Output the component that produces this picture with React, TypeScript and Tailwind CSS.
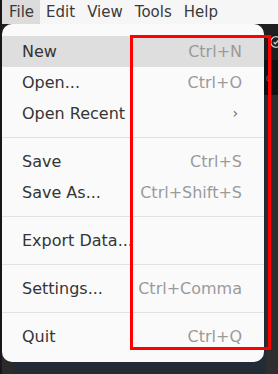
import React from "react";

type Item = { label: string; shortcut?: string; sub?: boolean; active?: boolean } | "sep";

const items: Item[] = [
  { label: "New", shortcut: "Ctrl+N", active: true },
  { label: "Open...", shortcut: "Ctrl+O" },
  { label: "Open Recent", sub: true },
  "sep",
  { label: "Save", shortcut: "Ctrl+S" },
  { label: "Save As...", shortcut: "Ctrl+Shift+S" },
  "sep",
  { label: "Export Data..." },
  "sep",
  { label: "Settings...", shortcut: "Ctrl+Comma" },
  "sep",
  { label: "Quit", shortcut: "Ctrl+Q" },
];

export default function App() {
  return (
    <div
      className="relative w-[278px] h-[374px] overflow-hidden flex bg-[#2e2e2e]"
      style={{ fontFamily: '"DejaVu Sans", sans-serif' }}
    >
      <div className="w-[2px] h-full bg-[#1b141a] shrink-0" />
      <div className="flex-1 flex flex-col">
        {/* menubar */}
        <div className="h-[24px] bg-[#f6f6f6] flex items-stretch text-[15px] text-[#3a3a3a]">
          {["File", "Edit", "View", "Tools", "Help"].map((m, i) => (
            <div
              key={m}
              className={
                "flex items-center px-[6px] " + (i === 0 ? "bg-[#dcdcdc] pl-[7px]" : "")
              }
            >
              {m}
            </div>
          ))}
        </div>
        {/* app content behind */}
        <div className="h-[36px] bg-[#1f1f1f] flex items-center justify-end">
          <svg width="14" height="14" viewBox="0 0 14 14" className="mr-[-5px]">
            <circle cx="7" cy="7" r="5.3" fill="none" stroke="#cfcfcf" strokeWidth="1.3" />
            <path d="M4.6 7.2 L6.3 8.8 L9.4 5.4" fill="none" stroke="#cfcfcf" strokeWidth="1.3" />
          </svg>
        </div>
        <div className="h-[35px] bg-[#121212] flex items-center justify-end pr-[6px]">
          <span className="text-[12px] text-[#555]">c</span>
        </div>
        <div className="flex-1 flex">
          <div className="w-[11px] bg-[#2b2b2b]" />
          <div className="flex-1 bg-[#232b36]" />
          <div className="w-[12px] bg-[#2e2e2e]" />
        </div>
      </div>

      {/* popup menu */}
      <div className="absolute left-[2px] top-[24px] w-[262px] h-[338px] bg-[#fafafa] rounded-[10px] pt-[12px] pb-[9px] text-[16px] flex flex-col">
        {items.map((it, i) =>
          it === "sep" ? (
            <div key={i} className="h-[1px] bg-[#e2e2e2] my-[8px]" />
          ) : (
            <div
              key={i}
              className={
                "h-[31px] shrink-0 flex items-center justify-between pl-[20px] pr-[22px] " +
                (it.active ? "bg-[#dedede]" : "")
              }
            >
              <span className="text-[#353535]">{it.label}</span>
              {it.shortcut && <span className="text-[#9a9a9a]">{it.shortcut}</span>}
              {it.sub && <span className="text-[#6a6a6a] text-[14px] mr-[4px]">›</span>}
            </div>
          )
        )}
      </div>

      {/* red annotation box */}
      <div className="absolute left-[130px] top-[35px] w-[141px] h-[315px] border-[3px] border-[#ff0000]" />
    </div>
  );
}
